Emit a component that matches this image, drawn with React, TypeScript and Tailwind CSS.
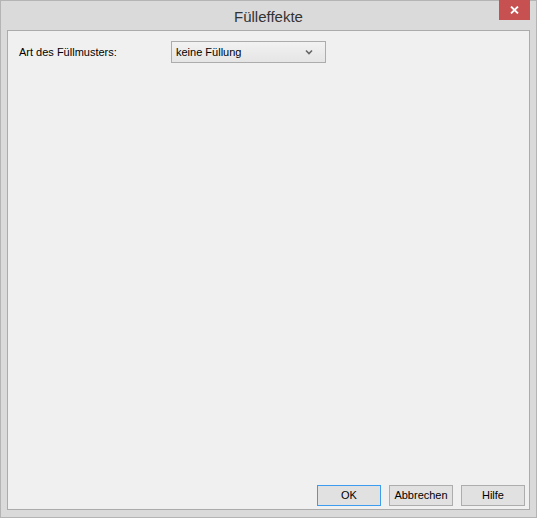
export default function App() {
  return (
    <div
      className="w-[537px] h-[518px] flex flex-col border border-[#b4b4b4] bg-[#dadada] px-[6px] pb-[7px] text-[#000]"
      style={{ fontFamily: '"Liberation Sans", Arial, sans-serif' }}
    >
      {/* title bar */}
      <div className="relative h-[29px] flex items-center justify-center shrink-0">
        <span className="text-[15px] text-[#333] pt-[3px]">Fülleffekte</span>
        <div className="absolute right-[0px] top-[-1px] w-[31px] h-[20px] bg-[#c75050] flex items-center justify-center">
          <svg width="9" height="8" viewBox="0 0 9 8">
            <path d="M1 0.5 L8 7.5 M8 0.5 L1 7.5" stroke="#fff" strokeWidth="1.8" />
          </svg>
        </div>
      </div>

      {/* client area */}
      <div className="flex-1 flex flex-col border border-[#ababab] bg-[#f0f0f0] text-[11px]">
        <div className="flex items-center pl-[11px] mt-[10px]">
          <span className="w-[152px]">Art des Füllmusters:</span>
          <div className="w-[155px] h-[22px] border border-[#acacac] bg-gradient-to-b from-[#f2f2f2] to-[#e5e5e5] flex items-center justify-between pl-[4px] pr-[12px]">
            <span>keine Füllung</span>
            <svg width="8" height="6" viewBox="0 0 8 6">
              <path d="M1 1.5 L4 4.5 L7 1.5" stroke="#666" strokeWidth="1.6" fill="none" />
            </svg>
          </div>
        </div>

        <div className="flex-1" />

        <div className="flex justify-end gap-[8px] pr-[4px] pb-[3px]">
          <button className="w-[64px] h-[21px] border border-[#3c9cf0] bg-[#e1e1e1] text-[11px]">OK</button>
          <button className="w-[64px] h-[21px] border border-[#adadad] bg-[#e1e1e1] text-[11px]">Abbrechen</button>
          <button className="w-[64px] h-[21px] border border-[#adadad] bg-[#e1e1e1] text-[11px]">Hilfe</button>
        </div>
      </div>
    </div>
  );
}
